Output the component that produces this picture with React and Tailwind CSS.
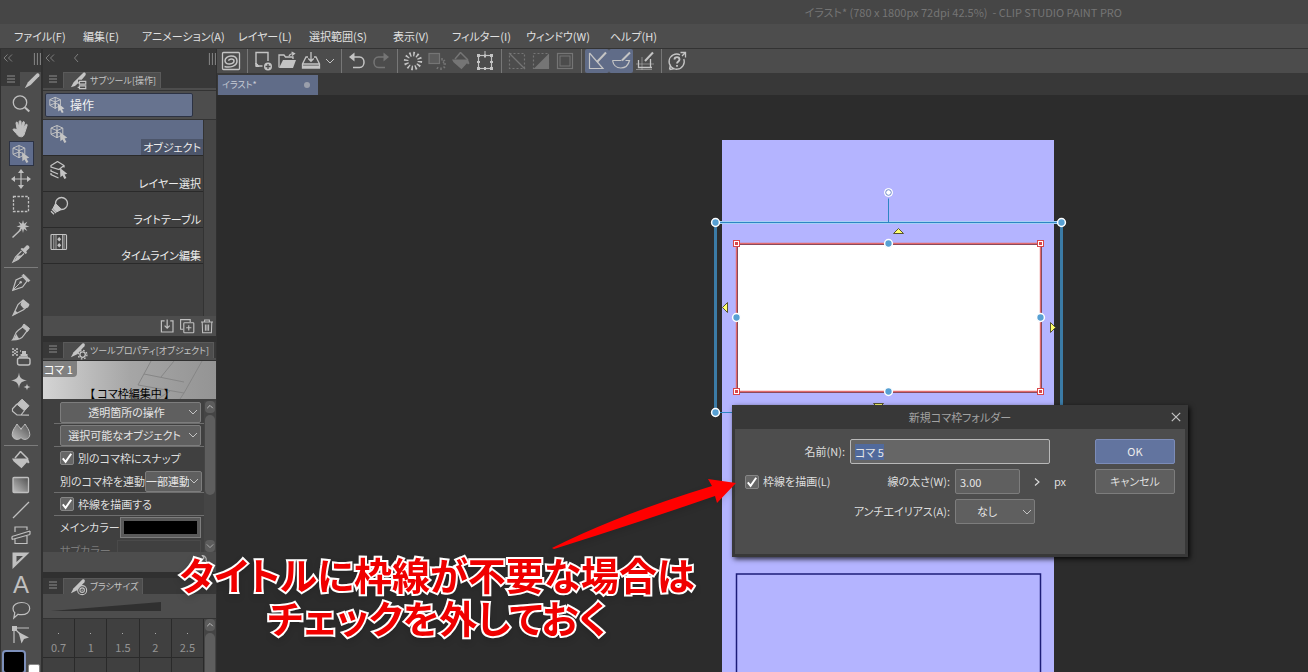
import { useEffect, useRef } from "react";
import clsx from "clsx";

const MENUS = [
    { label: "ファイル(F)", width: "w-[69px]" },
    { label: "編集(E)", width: "w-[59px]" },
    { label: "アニメーション(A)", width: "w-24" },
    { label: "レイヤー(L)", width: "w-[71px]" },
    { label: "選択範囲(S)", width: "w-[84px]" },
    { label: "表示(V)", width: "w-[59px]" },
    { label: "フィルター(I)", width: "w-[74px]" },
    { label: "ウィンドウ(W)", width: "w-[84px]" },
    { label: "ヘルプ(H)", width: "w-[70px]" },
];

const GLYPHS = {
    zoom: (
        <>
            <circle cx="9" cy="8.5" r="6.7" fill="none" strokeWidth="1.3" />
            <path d="M14 13.5l4.3 4" strokeWidth="2" />
        </>
    ),
    hand: (
        <path
            d="M6.2 10.5L5 4.2c-.2-1.2 1.3-1.5 1.6-.4L8 8.6 8.2 2.6c0-1.2 1.7-1.2 1.8 0l.3 5.9 1.4-5.2c.3-1.1 1.9-.8 1.7.4l-.8 5.6 2-3.6c.6-1 2-.3 1.5.8L13.8 13.5c-.5 2-1.3 4.3-3.2 4.3-2.6 0-4-1.2-5-3L2.3 11.3c-.7-1 .5-2 1.4-1.2z"
            fill="currentColor"
        />
    ),
    object: (
        <>
            <path d="M8 1.5l5.8 2.6v6.2L8 13.8l-6-3.5V4.1zM2 4.1l6 2.5 5.8-2.5M8 6.6v7.2M8 1.5v12.3M2 10.3L8 8l3 1" fill="none" strokeWidth="1" />
            <path d="M11 8l.4 9.2 2.2-1.6 1.8 3.4 2-1-1.8-3.4 2.7-.8z" fill="currentColor" stroke="none" />
        </>
    ),
    layerSelect: (
        <>
            <path d="M8.5 1.5l6.5 4v2M8.5 1.5L2 5.5v1.5l8 2.5 5-4M2 9.5V11l7 3M2 13v1.5L9.5 18" fill="none" strokeWidth="1.3" />
            <path d="M11 8l.4 9.2 2.2-1.6 1.8 3.4 2-1-1.8-3.4 2.7-.8z" fill="currentColor" stroke="none" />
        </>
    ),
    lightTable: (
        <>
            <circle cx="12.5" cy="7.5" r="6" fill="none" strokeWidth="1.3" />
            <path d="M6.5 7.5L12.5 13.4 7.5 16 4 12.5z" fill="currentColor" />
            <path d="M3 13l4 4M2 15.3l3 3" strokeWidth="1.3" />
        </>
    ),
    timeline: (
        <>
            <rect x="2" y="2.5" width="15.5" height="15" rx="1" fill="none" strokeWidth="1.2" />
            <path d="M4.8 2.5v15M7 2.5v15M13.5 2.5v15M15 2.5v15" strokeWidth=".8" />
            <path d="M10.2 5l2 2.2-2 2.2-2-2.2zM10.2 11l2 2.2-2 2.2-2-2.2z" fill="currentColor" stroke="none" />
        </>
    ),
    move: (
        <>
            <path d="M10 3v14M3 10h14" strokeWidth="1.2" />
            <path d="M10 0l3 4H7zM10 20l3-4H7zM0 10l4-3v6zM20 10l-4-3v6z" fill="currentColor" stroke="none" />
        </>
    ),
    marquee: <rect x="2.5" y="2.5" width="15" height="15" fill="none" strokeWidth="1.3" strokeDasharray="2.5 1.4" />,
    wand: (
        <>
            <path d="M1.5 18.5L10 10.5" strokeWidth="1.5" />
            <path d="M12 1l1 3.8 3.3-2-2 3.4L18.5 7.5l-4.2 1 2 3.5-3.3-2L12 14l-1-4-3.5 2 2-3.5-4-1 4-1.3-2-3.4 3.5 2z" fill="currentColor" stroke="none" />
        </>
    ),
    dropper: (
        <>
            <path d="M12.5 4.5l3-3c1.5-1 3.7 1.2 2.8 2.8l-3 3 .7 1.7-1.5 1L9.5 5l1.3-1z" fill="currentColor" stroke="none" />
            <path d="M10.5 7L4.5 13l-2.5 5 5-2.5L13 9.5" fill="none" strokeWidth="1.2" />
            <path d="M6.5 11.5h5L7 15.5l-4 1.8z" fill="currentColor" stroke="none" />
        </>
    ),
    pen: (
        <>
            <path d="M1.8 18.2L5 8l7-3.2L16 9l-4.5 6z" fill="none" strokeWidth="1.2" />
            <path d="M1.8 18.2l7-7" />
            <circle cx="9.7" cy="10.3" r="1.2" fill="currentColor" stroke="none" />
            <path d="M12.5 2.2l6.3 6.3-1.5 1.3L11.2 3.6z" fill="currentColor" />
        </>
    ),
    pencil: (
        <>
            <path d="M2 18.2L7 7.5l5-4.5 5.5 5.5-5 4.3z" fill="none" strokeWidth="1.2" />
            <path d="M12.5 2.5l6 4.7-1.5 3.3-4.5 1-3-3.5 1-3.5z" fill="currentColor" stroke="none" />
            <path d="M2 18.5l2.5-5 2.3 2.6z" fill="currentColor" stroke="none" />
        </>
    ),
    brush: (
        <>
            <path d="M1.5 18C4 16 3 11 7 8.5l5.5-4.3 4 4L13 13c-2 3.5-7 5-11.5 5z" fill="none" strokeWidth="1.2" />
            <path d="M13 2l5.5 4.5-2 3-5.3-4.6z" fill="currentColor" />
            <path d="M1.5 18c2-.5 2-3.5 4-6 1 2.5 1.5 3.5 3 4.5-2 1.2-4.5 1.7-7 1.5z" fill="currentColor" stroke="none" />
        </>
    ),
    airbrush: (
        <>
            <path d="M1 2h2M5 2h2M1 5h2M5 5h2M9 4h1M1 8h2M5 8h2M3 3.5h2M3 6.5h2" strokeWidth="1.3" />
            <path d="M11 4h4v3h1.5v2h-7V7H11z" fill="currentColor" stroke="none" />
            <rect x="6.5" y="11" width="12.5" height="7" rx="2" fill="none" strokeWidth="1.4" />
            <path d="M8 10h9" strokeWidth="1.5" />
        </>
    ),
    sparkle: (
        <path
            d="M8 .5c.6 5 2 7 8 8-6 .8-7.4 3-8 8-.7-5-2-7.2-8-8 6-1 7.3-3 8-8zM16 11.5c.4 2.3 1 3 3.5 3.5-2.5.5-3.1 1.2-3.5 3.5-.4-2.3-1-3-3.5-3.5 2.5-.5 3.1-1.2 3.5-3.5z"
            fill="currentColor"
            stroke="none"
        />
    ),
    eraser: (
        <>
            <path d="M11 2.2l7 6.5-4.5 5-7.5-6.5z" fill="currentColor" />
            <path d="M6 7l-4.5 4.8v2.5L6 18h4l3.5-4.5M6 18l12 .1" fill="none" strokeWidth="1.2" />
        </>
    ),
    blend: (
        <path d="M6 2c1.5 2.5 3 3 4 5.5 1-2.5 2.5-3 4-5.5 1.5 3 4.8 6 4.8 10.5 0 5-6.3 6.5-8.8 3-2.5 3.5-8.8 2-8.8-3C1.2 8 4.5 5 6 2z" fill="url(#fade)" strokeWidth="1" />
    ),
    fill: (
        <>
            <path d="M9.5 1.5L17 9M9.5 1.5L4 8" fill="none" strokeWidth="1.5" />
            <path d="M1 8.5h16l1.5 4-1.5 1-1-1.2-5.5 6-8-7z" fill="currentColor" stroke="none" />
        </>
    ),
    gradient: <rect x="2" y="2.5" width="15.5" height="15" rx="1" fill="url(#fade)" strokeWidth="1.3" />,
    line: <path d="M2 18L18 2" strokeWidth="1.3" />,
    frame: (
        <path d="M4 7V2h12v3M4 14v4.5h12V11M1 11.5L19 6M1 14.5L19 9.5M1 11.5v3M19 6v3.5" fill="none" strokeWidth="1.2" />
    ),
    ruler: <path d="M1.5 2.5h17L1.5 19zM5.5 6v6L12 6z" fill="currentColor" fillRule="evenodd" stroke="none" />,
    balloon: <path d="M10.5 2.5c5 0 8.2 2.5 8.2 6s-3.2 6.2-8.2 6.2c-1.2 0-2.5-.1-3.5-.5L2.8 18l1-5.3C2.5 11.6 2 10 2 8.5c0-3.5 3.5-6 8.5-6z" fill="none" strokeWidth="1.2" />,
    operate: (
        <>
            <path d="M3 3h15M3 3v15M3 3l7 7" strokeWidth="1.2" />
            <path d="M1 1h5v5H1z" fill="currentColor" stroke="none" />
            <path d="M7.5 7l3 11.5 2.5-4.5 5-1.5z" fill="currentColor" stroke="none" />
        </>
    ),
    clip: (
        <>
            <rect x="1.5" y="1.5" width="17" height="17" rx="1" fill="none" strokeWidth="1.3" />
            <path d="M3.5 15.5c5 1.5 12.5 0 12.5-5.5 0-3.5-3-5-6-5s-6 2-6 4.8c0 2.3 2.3 3.4 4.7 3.2 2.3-.2 4.3-1.3 4.3-2.9 0-1.4-1.3-2-2.7-2-1.5 0-2.6.8-2.6 1.7" fill="none" strokeWidth="1.5" />
        </>
    ),
    newFile: (
        <>
            <path d="M9.5 15H5.5L3 12.5V1.5h12V10" fill="none" strokeWidth="1.4" />
            <path d="M2.8 12v3.5H6z" fill="currentColor" />
            <circle cx="15" cy="15.5" r="4" fill="currentColor" stroke="none" />
            <path d="M15 13v5M12.5 15.5h5" stroke="#4c4c4c" strokeWidth="1.3" />
        </>
    ),
    open: (
        <>
            <path d="M2 16.5V4h5l1.5 2H16v2" fill="none" strokeWidth="1.3" />
            <path d="M6 9h13l-3 8H2z" fill="currentColor" stroke="none" />
            <path d="M12 5c1-2 2.5-2.5 4.5-2.5M14.5 1l3 1.5-2.5 2" fill="none" strokeWidth="1.2" />
        </>
    ),
    save: (
        <>
            <path d="M7 6H5L1.5 13v4h17v-4L15 6h-2M1.5 13h17M10 1v9M7.3 7.5L10 10.3l2.7-2.8" fill="none" strokeWidth="1.3" />
            <path d="M1.5 14.5h17v2.5h-17z" fill="currentColor" stroke="none" />
        </>
    ),
    undo: (
        <>
            <path d="M4 6h8.5c6 0 6 10.5 0 10.5H6" fill="none" strokeWidth="1.5" />
            <path d="M7.5 1.5L2 6l5.5 4.5z" fill="currentColor" stroke="none" />
        </>
    ),
    redo: (
        <>
            <path d="M16 6H7.5C1.5 6 1.5 16.5 7.5 16.5H14" fill="none" strokeWidth="1.5" />
            <path d="M12.5 1.5L18 6l-5.5 4.5z" fill="currentColor" stroke="none" />
        </>
    ),
    burst: <circle cx="10" cy="10" r="6.9" fill="none" strokeWidth="4.5" strokeDasharray="1.5 2.113" />,
    deselect: (
        <>
            <rect x="2" y="2.5" width="10.5" height="10" fill="#5c5c5c" strokeWidth="1.2" />
            <path d="M15 7v2.5M18 9l-2 1.5M19 13h-2.5M18 17l-1.5-1.5M14 19v-2.5M10 18l1-2M16 12l1-1" strokeWidth="1.5" />
        </>
    ),
    transform: (
        <>
            <rect x="3.5" y="4.5" width="13" height="13" fill="none" strokeWidth="1.2" />
            <path d="M10 0v4" strokeWidth="1" />
            <path d="M2 3h3v3H2zM15 3h3v3h-3zM2 16h3v3H2zM15 16h3v3h-3zM9 3.5h2v3H9zM9 16h2v3H9zM2 10h3v2H2zM15 10h3v2h-3z" fill="currentColor" stroke="none" />
        </>
    ),
    selLine: (
        <>
            <rect x="2.5" y="2.5" width="15" height="15" fill="none" strokeWidth="1.2" strokeDasharray="2 2" />
            <path d="M2 2l16 16" strokeWidth="1.2" />
        </>
    ),
    selHalf: (
        <>
            <rect x="2.5" y="2.5" width="15" height="15" fill="none" strokeWidth="1.2" strokeDasharray="2 2" />
            <path d="M18 2.5V18H2.5z" fill="currentColor" stroke="none" />
        </>
    ),
    selFrame: (
        <>
            <rect x="2.5" y="2.5" width="15" height="15" fill="none" strokeWidth="1.2" />
            <rect x="5" y="5" width="10" height="10" fill="none" strokeWidth="1" />
        </>
    ),
    snapRuler: (
        <>
            <path d="M2.5 2v15.5H16L2.5 2" fill="none" strokeWidth="1.2" />
            <path d="M10 11L19 1.5" strokeWidth="2" />
        </>
    ),
    snapCurve: (
        <>
            <path d="M1.5 9.5c2 10 14.5 10 17 0h-4M1.5 9.5h9" fill="none" strokeWidth="1.2" />
            <path d="M11 9.5L19 1.5" strokeWidth="2" />
        </>
    ),
    snapGrid: (
        <>
            <path d="M3.5 9v7.5H17M15.5 8v8.5" fill="none" strokeWidth="1.3" />
            <path d="M10 10L18 1.5" strokeWidth="2" />
            <path d="M1 13h18M7 6v13M1 18.5h16" strokeWidth=".5" />
        </>
    ),
    help: (
        <>
            <path d="M13 3.8A7.6 7.6 0 1 0 16.8 8M2.5 18.5l1-5M2.5 18.5l5-1M13.5 1.5h5v5M18.5 1.5L15 5" fill="none" strokeWidth="1.3" />
            <path d="M7.5 8.5c0-3.2 5-3.2 5 0 0 2-2.5 2-2.5 4" fill="none" strokeWidth="1.8" />
            <path d="M10 14v1.8" strokeWidth="1.8" />
        </>
    ),
    nib: <path d="M2 18l3.5-6.5L15 2c2-1.5 4.3.8 3 2.8L8.5 14.5z" fill="currentColor" stroke="none" />,
    toolTab: (
        <>
            <path d="M1 17l3-5.5L14.5 1c2-1.5 4 .5 2.5 2.8l-4 4.7H9v4l-3.5 3z" fill="currentColor" stroke="none" />
            <path d="M10.5 10.5h7v3h-7zM10.5 15.5h7v3h-7zM8.5 12h2M8.5 17h2" fill="none" strokeWidth="1.3" />
        </>
    ),
    propTab: (
        <>
            <path d="M1 17l3-5.5L13.5 2c2-1.5 4 .5 2.5 2.8L8 13.5z" fill="currentColor" stroke="none" />
            <circle cx="14" cy="14" r="3" fill="none" strokeWidth="1.5" />
            <circle cx="14" cy="14" r="4.8" fill="none" strokeWidth="1.5" strokeDasharray="1.8 1.97" />
        </>
    ),
    sizeTab: (
        <>
            <path d="M1 17l3-5.5L13.5 2c2-1.5 4 .5 2.5 2.8L8 13.5z" fill="currentColor" stroke="none" />
            <circle cx="13.5" cy="13.5" r="5" fill="none" strokeWidth="1.2" />
            <circle cx="13.5" cy="13.5" r="2.5" fill="none" strokeWidth="1.2" />
            <circle cx="13.5" cy="13.5" r=".8" fill="currentColor" stroke="none" />
        </>
    ),
    importIcon: (
        <path d="M7 3.5H3v14h14.5v-14H14M10.2 2v10.5M7 9.5l3.2 3.2 3.2-3.2" fill="none" strokeWidth="1.5" />
    ),
    duplicate: (
        <>
            <path d="M5 14H2V2h12v3" fill="none" strokeWidth="1.4" />
            <rect x="6" y="6" width="12.5" height="12.5" rx="1" fill="none" strokeWidth="1.4" />
            <path d="M12.2 9v6.5M9 12.2h6.5" strokeWidth="1.4" />
        </>
    ),
    trash: (
        <path d="M2.5 5h15M7 5V2.5h6V5M4 5l.5 13.5h11L16 5M8 8v8M10 8v8M12 8v8" fill="none" strokeWidth="1.3" />
    ),
    wrench: (
        <path d="M10 8.5c-1-3 1-6.5 4.5-6.5l-2 3 2.5 2.5 3-1.5c0 3.5-3 5-5.5 4.2L5.5 18c-1.5 1.5-4-.5-2.5-2.5z" fill="none" strokeWidth="1.4" transform="matrix(-1 0 0 1 20 0)" />
    ),
    check: <path d="M4 10.5l4 5L16 4" fill="none" strokeWidth="2.8" />,
    close: <path d="M3 3l14 14M17 3L3 17" fill="none" strokeWidth="2" />,
    down: <path d="M2 6l8 8 8-8" fill="none" strokeWidth="2" />,
    up: <path d="M3 13l7-7 7 7" fill="none" strokeWidth="2.5" />,
    left: <path d="M14 2L7 10l7 8" fill="none" strokeWidth="1.8" />,
    right: <path d="M6 3l8 7-8 7" fill="none" strokeWidth="2.2" />,
    leftDouble: <path d="M9 3l-7 7 7 7M18 3l-7 7 7 7" fill="none" strokeWidth="1.8" />,
    grip: <path d="M9 0v20M14 0v20M19 0v20" strokeWidth="1.7" />,
    burger: <path d="M2 4h16M2 10h16M2 16h16" strokeWidth="2" />,
};

const TOOL_GROUPS = [
    [["zoom", "虫めがね"], ["hand", "移動"], ["object", "操作"], ["move", "レイヤー移動"], ["marquee", "選択範囲"], ["wand", "自動選択"], ["dropper", "スポイト"]],
    [["pen", "ペン"], ["pencil", "鉛筆"], ["brush", "筆"], ["airbrush", "エアブラシ"], ["sparkle", "デコレーション"], ["eraser", "消しゴム"], ["blend", "色混ぜ"]],
    [["fill", "塗りつぶし"], ["gradient", "グラデーション"], ["line", "図形"], ["frame", "コマ枠"], ["ruler", "定規"], ["text", "テキスト"], ["balloon", "フキダシ"], ["operate", "線修正"]],
];

const COMMANDS = [
    [{ icon: "clip" }],
    [{ icon: "newFile" }, { icon: "open" }, { icon: "save" }, { icon: "down", small: true }],
    [{ icon: "undo" }, { icon: "redo", off: true }],
    [{ icon: "burst" }, { icon: "deselect", off: true }, { icon: "fill", off: true }, { icon: "transform" }],
    [{ icon: "selLine", off: true }, { icon: "selHalf", off: true }, { icon: "selFrame", off: true }],
    [{ icon: "snapRuler", active: true }, { icon: "snapCurve", active: true }, { icon: "snapGrid" }],
    [{ icon: "help" }],
];

const SUB_TOOLS = [
    { icon: "object", label: "オブジェクト", active: true },
    { icon: "layerSelect", label: "レイヤー選択" },
    { icon: "lightTable", label: "ライトテーブル" },
    { icon: "timeline", label: "タイムライン編集" },
];

const BRUSH_SIZES = ["0.7", "1", "1.5", "2", "2.5"];
const BRUSH_DOTS = ["size-1", "size-1", "size-1", "size-1", "size-1.5"];

function Icon({ name, className = "size-5" }) {
    return (
        <svg viewBox="0 0 20 20" className={clsx("shrink-0", className)} stroke="currentColor" aria-hidden="true">
            {GLYPHS[name]}
        </svg>
    );
}

function PanelTab({ icon, label }) {
    return (
        <div className="flex h-[18px] shrink-0 items-end border-b-2 border-[#4d4d4d] bg-[#383838]">
            <Icon name="burger" className="mx-[5px] mb-1 size-2.5 text-[#8c8c8c]" />
            <div className="flex h-full items-center gap-0.5 border-x border-t border-[#5a5a5a] bg-[#4d4d4d] pr-1 pl-1.5 text-[#c4c4c4]">
                <Icon name={icon} className="size-[18px]" />
                <span className="text-[9px] leading-4 whitespace-nowrap">{label}</span>
            </div>
        </div>
    );
}

function Scrollbar({ thumb, end }) {
    return (
        <div className="flex w-3 shrink-0 flex-col items-center bg-[#454545] text-[#bdbdbd]">
            <button className="flex h-3 w-2.5 items-center justify-center rounded-sm bg-[#5c5c5c]" aria-label="上へ">
                <Icon name="up" className="size-2" />
            </button>
            <div className={clsx("mt-0.5 w-2.5 rounded-md bg-[#5e5e5e]", thumb)} />
            {end && (
                <button className="mt-auto flex h-3 w-2.5 items-center justify-center rounded-sm bg-[#5c5c5c]" aria-label="下へ">
                    <Icon name="down" className="size-2" />
                </button>
            )}
        </div>
    );
}

function Select({ label, value, id, className, textClass }) {
    return (
        <div className={clsx("relative shrink-0", className)}>
            <select
                id={id}
                aria-label={label}
                className={clsx("h-full w-full appearance-none rounded-xs border border-[#7d7d7d] bg-[#5f5f5f] text-[11px] text-[#e6e6e6] [text-align-last:center]", textClass)}
            >
                <option>{value}</option>
            </select>
            <Icon name="down" className="pointer-events-none absolute top-1/2 right-[3px] size-2.5 -translate-y-1/2 text-[#c4c4c4]" />
        </div>
    );
}

function Checkbox({ label }) {
    return (
        <label className="flex items-center gap-1">
            <span className="relative flex size-3.5 shrink-0">
                <input type="checkbox" defaultChecked className="peer size-3.5 appearance-none rounded-xs border border-[#868686] bg-[#666]" />
                <Icon name="check" className="pointer-events-none absolute inset-0 hidden size-3.5 text-white peer-checked:block" />
            </span>
            <span className="whitespace-nowrap">{label}</span>
        </label>
    );
}

function ToolStrip() {
    return (
        <aside className="flex w-[43px] shrink-0 flex-col border-r-2 border-l border-[#303030] bg-[#4d4d4d] text-[#c0c0c0]">
            <div className="flex h-[23px] shrink-0 items-start justify-between bg-[#383838] pt-1 pl-0.5 text-[#858585]">
                <Icon name="leftDouble" className="size-2.5" />
                <Icon name="grip" className="size-3" />
            </div>
            <div className="flex h-[18px] shrink-0 items-start justify-between bg-[#4d4d4d]">
                <div className="flex h-3.5 w-[19px] items-center justify-center bg-[#383838] text-[#8c8c8c]">
                    <Icon name="burger" className="size-2.5" />
                </div>
                <Icon name="nib" className="size-[18px]" />
            </div>
            <nav className="flex flex-col pt-px">
                {TOOL_GROUPS.map((tools, idx) => (
                    <div key={idx} className={clsx("flex flex-col items-center", idx > 0 && "mx-[3px] mt-px border-t border-[#7c7c7c] pt-px")}>
                        {tools.map(([icon, name]) => (
                            <button
                                key={icon}
                                aria-label={name}
                                className={clsx(
                                    "flex h-[25px] w-[25px] items-center justify-center",
                                    icon === "object" && "border border-[#2c3243] bg-[#5f6c8c]"
                                )}
                            >
                                {icon === "text" ? <span className="font-['Liberation_Sans'] text-2xl leading-6">A</span> : <Icon name={icon} />}
                            </button>
                        ))}
                    </div>
                ))}
            </nav>
            <div className="flex items-start gap-0.5 pt-[3px] pl-px">
                <div className="size-6 shrink-0 rounded-sm border-2 border-[#7d90bb] bg-black" />
                <div className="mt-3.5 size-3 shrink-0 rounded-xs border border-[#888] bg-white" />
            </div>
        </aside>
    );
}

function SubToolPanel() {
    return (
        <section className="flex flex-col">
            <PanelTab icon="toolTab" label="サブツール[操作]" />
            <div className="border-y border-[#333] bg-[#4d4d4d] py-0.5 pl-0.5">
                <button className="flex h-6 w-[148px] items-center gap-1 rounded-xs border border-[#2c3243] bg-[#67738f] pl-0.5 text-xs text-[#f2f2f2]">
                    <Icon name="object" className="size-[18px] text-[#ccc]" />
                    操作
                </button>
            </div>
            <div className="flex h-[196px] bg-[#404040]">
                <ul className="flex-1">
                    {SUB_TOOLS.map((tool) => (
                        <li key={tool.label}>
                            <button
                                className={clsx(
                                    "flex h-9 w-full items-end justify-between border-b border-[#2a2a2a] pl-1.5 text-[11px] text-[#ececec]",
                                    tool.active && "bg-[#606c88]"
                                )}
                            >
                                <Icon name={tool.icon} className="mb-[11px] size-5 text-[#c4c4c4]" />
                                <span className={clsx("px-0.5 leading-4", tool.active && "bg-[#4c556a]")}>{tool.label}</span>
                            </button>
                        </li>
                    ))}
                </ul>
                <div className="w-[13px] border-l border-[#333] bg-[#464646]" />
            </div>
            <div className="flex h-5 items-center justify-end gap-1 bg-[#4d4d4d] pr-px text-[#c0c0c0]">
                <button aria-label="追加"><Icon name="importIcon" className="size-4" /></button>
                <button aria-label="複製"><Icon name="duplicate" className="size-4" /></button>
                <button aria-label="削除"><Icon name="trash" className="size-4" /></button>
            </div>
        </section>
    );
}

function SettingRow({ line, children }) {
    return (
        <div className={clsx("ml-[11px] flex h-[23px] items-center justify-between border-b pr-[3px] pl-1.5 text-[11px] whitespace-nowrap", line ? "border-[#6e6e6e]" : "border-transparent")}>
            {children}
        </div>
    );
}

function ToolPropertyPanel() {
    return (
        <section className="mt-1.5 flex flex-col">
            <PanelTab icon="propTab" label="ツールプロパティ[オブジェクト]" />
            <div className="relative mt-px flex h-[38px] items-end justify-center overflow-hidden bg-linear-to-r from-[#d4d4d4] via-[#a6a6a6] to-[#949494]">
                <svg viewBox="0 0 80 38" className="absolute top-0 right-0 h-full w-20" fill="none" stroke="#868686" aria-hidden="true">
                    <path d="M15 0L2 24l46 8L66 0M8 13l40 8M38 0L25 16M20 27l-6 11M48 32l-4 6M22 38L34 30" />
                </svg>
                <span className="absolute top-0 left-0 rounded-br-sm bg-[#808080] pr-1 pl-px text-[11px] leading-4 text-white">コマ 1</span>
                <span className="relative text-[11px] leading-3 text-black">【 コマ枠編集中 】</span>
            </div>
            <div className="flex h-[153px] overflow-hidden bg-[#404040] pt-0.5 text-[#dedede]">
                <div className="min-w-0 flex-1">
                    <SettingRow line>
                        <Select label="透明箇所の操作" value="透明箇所の操作" className="h-[21px] w-full" textClass="pr-2" />
                    </SettingRow>
                    <SettingRow line>
                        <Select label="選択可能なオブジェクト" value="選択可能なオブジェクト" className="h-[21px] w-full" textClass="pr-3" />
                    </SettingRow>
                    <SettingRow>
                        <Checkbox label="別のコマ枠にスナップ" />
                    </SettingRow>
                    <SettingRow line>
                        <label htmlFor="link">別のコマ枠を連動</label>
                        <Select id="link" value="一部連動" className="h-[21px] w-[57px]" textClass="pr-3" />
                    </SettingRow>
                    <SettingRow line>
                        <Checkbox label="枠線を描画する" />
                    </SettingRow>
                    <SettingRow>
                        <span>メインカラー</span>
                        <button aria-label="メインカラー" className="h-[21px] w-[84px] border border-[#7d7d7d] bg-[#595959] p-[3px]">
                            <span className="block h-full bg-black" />
                        </button>
                    </SettingRow>
                    <SettingRow>
                        <span className="text-[#7a7a7a]">サブカラー</span>
                        <span className="h-[21px] w-[84px] border border-[#4a4a4a]" />
                    </SettingRow>
                </div>
                <Scrollbar thumb="h-20" end />
            </div>
            <div className="flex h-5 items-center justify-end bg-[#4d4d4d] pr-0.5 text-[#bdbdbd]">
                <button aria-label="設定"><Icon name="wrench" className="size-4" /></button>
            </div>
        </section>
    );
}

function BrushSizePanel() {
    return (
        <section className="mt-1.5 flex flex-col">
            <PanelTab icon="sizeTab" label="ブラシサイズ" />
            <div className="h-[22px] bg-[#4d4d4d] pt-1.5 pl-2">
                <svg viewBox="0 0 110 10" className="h-2.5 w-[110px]" aria-hidden="true">
                    <path d="M0 9L110 0v9z" fill="#303030" />
                </svg>
            </div>
            <div className="flex border-t border-[#333]">
                <div className="grid flex-1 grid-cols-5">
                    {BRUSH_SIZES.map((size) => (
                        <button key={size} className="flex h-[39px] flex-col items-center justify-between border-r border-b border-[#2a2a2a] bg-[#404040] pt-3.5 pb-0.5 text-[11px] leading-4 text-[#949494]">
                            <span className="size-px shrink-0 bg-[#aaa]" />
                            {size}
                        </button>
                    ))}
                    {BRUSH_DOTS.map((dot, idx) => (
                        <button key={idx} aria-label="ブラシ" className="flex h-[39px] justify-center border-r border-b border-[#2a2a2a] bg-[#404040] pt-3.5">
                            <span className={clsx("rounded-full bg-[#aaa]", dot)} />
                        </button>
                    ))}
                </div>
                <Scrollbar thumb="h-16" />
            </div>
        </section>
    );
}

function CommandBar() {
    return (
        <div className="flex h-6 shrink-0 items-center bg-[#4c4c4c] pl-0.5 text-[#c4c4c4]">
            {COMMANDS.map((group, idx) => (
                <div key={idx} className="flex h-full items-center">
                    {idx > 0 && <span className="mr-[3px] ml-1 h-full w-px bg-[#777]" />}
                    {group.map((cmd) => (
                        <button
                            key={cmd.icon}
                            aria-label={cmd.icon}
                            disabled={cmd.off}
                            className={clsx(
                                "flex h-full items-center justify-center disabled:text-[#757575]",
                                cmd.small ? "w-3.5" : "w-6",
                                cmd.active && "rounded-xs bg-[#606c88]"
                            )}
                        >
                            <Icon name={cmd.icon} className={cmd.small ? "size-2.5" : "size-5"} />
                        </button>
                    ))}
                </div>
            ))}
        </div>
    );
}

const SIDE_HANDLES = [[171, 147], [19, 221], [323, 221], [171, 295], [-2, 126], [344, 126], [-2, 316]];
const CORNERS = [[19, 147], [323, 147], [19, 295], [323, 295]];

// Page with the selected frame border and its transform handles
function Artwork() {
    return (
        <svg className="absolute top-[45px] left-[505px] h-[540px] w-[360px] overflow-visible" aria-hidden="true">
            <path d="M0 0h332v640H0z" fill="#b4b4ff" />
            <path d="M14.5 640V434h304v206" fill="none" stroke="#1c1c78" strokeWidth="1.5" />
            <g transform="translate(-4.5 -43.5)">
                <path d="M-2 126h346" stroke="#a6d0f5" strokeWidth="3" />
                <path d="M-2 316V126h346v190M-2 316h40M171 102v24" fill="none" stroke="#2d86c4" />
                <path d="M-2 126v190M344 126v190" stroke="#3b7ba6" strokeWidth="3" />
                <path d="M20 148h304v148H20z" fill="#fff" stroke="#6e4258" />
                <path d="M19 147h304v148H19z" fill="none" stroke="#e2696b" strokeWidth="1.4" />
                {CORNERS.map(([x, y]) => (
                    <g key={`${x}-${y}`}>
                        <rect x={x - 3} y={y - 3} width="6" height="6" fill="#fff" stroke="#d9474b" />
                        <rect x={x - 1.5} y={y - 1.5} width="3" height="3" fill="#d9474b" />
                    </g>
                ))}
                {SIDE_HANDLES.map(([x, y]) => (
                    <circle key={`${x}-${y}`} cx={x} cy={y} r="3.9" fill="#57a0d3" stroke="#fff" strokeWidth="1.5" />
                ))}
                <circle cx="171" cy="96" r="4" fill="#fff" stroke="#fff" />
                <circle cx="171" cy="96" r="2.8" fill="#fff" stroke="#6d87c9" />
                <path d="M176 137h10l-5-5zM156 307h10l-5 5zM10 206v10l-5-5zM333 226v10l5-5z" fill="#ffff6e" stroke="#56532f" />
            </g>
        </svg>
    );
}

function NewFrameDialog() {
    const nameRef = useRef(null);

    useEffect(() => {
        nameRef.current?.focus();
        nameRef.current?.select();
    }, []);

    return (
        <form role="dialog" aria-labelledby="dialog-title" className="absolute top-[310px] left-[515px] w-[456px] bg-[#383838] px-[3px] pb-[3px] text-[11px] text-[#dedede] shadow-[2px_2px_5px_rgba(0,0,0,0.8)]">
            <div className="relative flex h-6 items-center justify-center">
                <h2 id="dialog-title" className="text-[#a2a2a2]">新規コマ枠フォルダー</h2>
                <button type="button" aria-label="閉じる" className="absolute right-px flex size-4 items-center justify-center text-[#c4c4c4]">
                    <Icon name="close" className="size-3" />
                </button>
            </div>
            <div className="flex h-[125px] items-start justify-between bg-[#4d4d4d] px-2.5 pt-2.5">
                <div className="flex flex-col gap-[5px]">
                    <div className="flex h-[25px] items-center gap-[5px]">
                        <label htmlFor="name" className="w-[100px] text-right">名前(N):</label>
                        <input
                            ref={nameRef}
                            id="name"
                            defaultValue="コマ 5"
                            className="h-full w-[200px] rounded-xs border border-[#b8b8b8] bg-[#666] px-1 text-[#e6e6e6] outline-none selection:bg-[#516a9c] selection:text-[#e6e6e6]"
                        />
                    </div>
                    <div className="flex h-[25px] items-center gap-[5px]">
                        <div className="flex w-[205px] items-center justify-between">
                            <Checkbox label="枠線を描画(L)" />
                            <label htmlFor="weight">線の太さ(W):</label>
                        </div>
                        <input id="weight" defaultValue="3.00" className="h-full w-[65px] rounded-xs border border-[#7d7d7d] bg-[#5f5f5f] px-1 text-[#e6e6e6] outline-none" />
                        <button type="button" aria-label="調整" className="flex w-6 justify-center">
                            <Icon name="right" className="size-2.5" />
                        </button>
                        <span className="w-4">px</span>
                    </div>
                    <div className="flex h-[25px] items-center gap-[5px]">
                        <label htmlFor="antialias" className="w-[205px] text-right">アンチエイリアス(A):</label>
                        <Select id="antialias" value="なし" className="h-full w-20" textClass="pr-4" />
                    </div>
                </div>
                <div className="flex w-20 flex-col gap-[5px]">
                    <button type="submit" className="h-[25px] rounded-xs border border-[#7c8cb8] bg-[#62749f] text-[#ececec]">OK</button>
                    <button type="button" className="h-[25px] rounded-xs border border-[#7d7d7d] bg-[#5f5f5f]">キャンセル</button>
                </div>
            </div>
        </form>
    );
}

function Callout() {
    return (
        <div className="pointer-events-none absolute top-[385px] -left-10">
            <svg viewBox="0 0 190 72" className="ml-[373px] h-[72px] w-[190px] overflow-visible drop-shadow-md" aria-hidden="true">
                <path d="M2 68Q70 34 162 6l-4-7 28 4-19 20-2-7Q90 42 4 69z" fill="#ff0000" />
            </svg>
            <p className="w-[520px] text-center text-[38px] leading-[43px] font-bold whitespace-nowrap text-[#f00000] drop-shadow-md [-webkit-text-stroke:4px_#fff] [paint-order:stroke]">
                タイトルに枠線が不要な場合は
                <br />
                チェックを外しておく
            </p>
        </div>
    );
}

export default function App() {
    return (
        <div className="flex h-screen flex-col overflow-hidden bg-[#2c2c2c] font-['Noto_Sans_CJK_JP',sans-serif] [font-feature-settings:'palt']">
            <svg className="absolute size-0" aria-hidden="true">
                <linearGradient id="fade" x1="0" y1="1" x2="1" y2="0">
                    <stop offset="0" stopColor="#c0c0c0" />
                    <stop offset="1" stopColor="#505050" />
                </linearGradient>
            </svg>
            <header className="shrink-0">
                <div className="flex h-6 items-center justify-end bg-[#464646] pr-[186px] text-[11px] whitespace-pre text-[#757575]">
                    イラスト* (780 x 1800px 72dpi 42.5%)  - CLIP STUDIO PAINT PRO
                </div>
                <nav className="flex h-[25px] items-center border-b border-[#333] bg-[#4d4d4d] pl-3.5 text-[11px] text-[#e0e0e0]">
                    {MENUS.map((menu) => (
                        <button key={menu.label} className={clsx("text-left whitespace-nowrap", menu.width)}>
                            {menu.label}
                        </button>
                    ))}
                </nav>
            </header>
            <div className="flex min-h-0 flex-1">
                <ToolStrip />
                <aside className="flex w-[174px] shrink-0 flex-col border-r border-[#303030] bg-[#303030]">
                    <div className="flex h-[23px] shrink-0 items-start bg-[#383838] pt-1 pl-0.5 text-[#858585]">
                        <Icon name="leftDouble" className="size-2.5" />
                        <Icon name="left" className="ml-4 size-2.5" />
                        <Icon name="grip" className="ml-auto size-3" />
                    </div>
                    <SubToolPanel />
                    <ToolPropertyPanel />
                    <BrushSizePanel />
                </aside>
                <main className="flex min-w-0 flex-1 flex-col">
                    <CommandBar />
                    <div className="flex h-[22px] shrink-0 items-end bg-[#383838] pl-px">
                        <div className="flex h-5 w-[100px] items-center justify-between bg-[#606c88] pr-2 pl-1 text-[9px] text-[#c8ccd6]">
                            イラスト*
                            <span className="size-1.5 rounded-full bg-[#9a9fac]" />
                        </div>
                    </div>
                    <div className="relative flex-1">
                        <Artwork />
                        <NewFrameDialog />
                        <Callout />
                    </div>
                </main>
            </div>
        </div>
    );
}
